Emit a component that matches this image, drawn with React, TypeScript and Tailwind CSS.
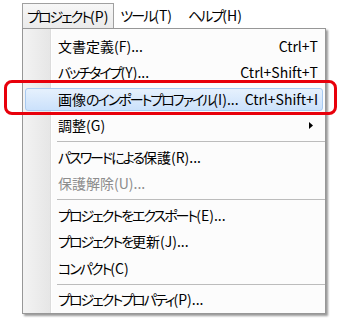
const FONT = "[font-family:'Noto_Sans_CJK_JP',sans-serif] [font-feature-settings:'palt']"

type Entry =
  | { kind: 'item'; label: string; shortcut?: string; disabled?: boolean; sub?: boolean; hot?: boolean }
  | { kind: 'sep' }

const entries: Entry[] = [
  { kind: 'item', label: '文書定義(F)...', shortcut: 'Ctrl+T' },
  { kind: 'item', label: 'バッチタイプ(Y)...', shortcut: 'Ctrl+Shift+T' },
  { kind: 'item', label: '画像のインポートプロファイル(I)...', shortcut: 'Ctrl+Shift+I', hot: true },
  { kind: 'item', label: '調整(G)', sub: true },
  { kind: 'sep' },
  { kind: 'item', label: 'パスワードによる保護(R)...' },
  { kind: 'item', label: '保護解除(U)...', disabled: true },
  { kind: 'sep' },
  { kind: 'item', label: 'プロジェクトをエクスポート(E)...' },
  { kind: 'item', label: 'プロジェクトを更新(J)...' },
  { kind: 'item', label: 'コンパクト(C)' },
  { kind: 'sep' },
  { kind: 'item', label: 'プロジェクトプロパティ(P)...' },
]

// kana in the UI font are narrower than full width, so tighten them
function Jp({ text }: { text: string }) {
  return (
    <>
      {text.split(/([\u3040-\u30ff]+)/).map((part, i) =>
        /^[\u3040-\u30ff]+$/.test(part) ? (
          <span key={i} className="tracking-[-2px]">
            {part}
          </span>
        ) : (
          <span key={i}>{part}</span>
        ),
      )}
    </>
  )
}

export default function App() {
  return (
    <div className={`relative h-[319px] w-[341px] overflow-hidden bg-white text-[14px] text-black ${FONT}`}>
      {/* menu bar */}
      <div className="flex h-[28px] items-end pl-[22px]">
        <div className="flex h-[25px] items-center border-x border-t border-[#a0a0a0] bg-gradient-to-b from-[#f7f7f7] to-[#ebebeb] pl-[4px] pr-[5px] whitespace-nowrap">
          <Jp text="プロジェクト(P)" />
        </div>
        <div className="flex h-[25px] items-center pl-[6px] whitespace-nowrap">
          <Jp text="ツール(T)" />
        </div>
        <div className="flex h-[25px] items-center pl-[16px] whitespace-nowrap">
          <Jp text="ヘルプ(H)" />
        </div>
      </div>

      {/* dropdown */}
      <div className="ml-[22px] w-[304px] border border-[#979797] bg-[linear-gradient(to_right,#f3f3f3_0,#e6e6e6_27px,#dcdcdc_27px,#dcdcdc_28px,#ffffff_28px,#ffffff_29px,#fcfcfc_29px)] pt-[4px] shadow-[2px_2px_2px_rgba(0,0,0,0.4)]">
        {entries.map((e, i) =>
          e.kind === 'sep' ? (
            <div key={i} className="flex h-[5px] items-center pl-[34px]">
              <div className="h-px w-full bg-[#bcbcbc]" />
            </div>
          ) : (
            <div key={i} className="h-[26.5px] px-[2px] py-[2px]">
              <div
                className={`flex h-full items-center justify-between rounded-[3px] border pl-[32px] pr-[4px] ${
                  e.hot
                    ? 'border-[#a8caf1] bg-gradient-to-b from-[#e6f1fd] to-[#cbe1fb]'
                    : 'border-transparent'
                } ${e.disabled ? 'text-[#8d8d8d]' : ''}`}
              >
                <span className="whitespace-nowrap">
                  <Jp text={e.label} />
                </span>
                {e.shortcut && <span className="whitespace-nowrap">{e.shortcut}</span>}
                {e.sub && (
                  <svg width="4" height="7" viewBox="0 0 4 7" className="mr-[5px]">
                    <path d="M0 0L4 3.5L0 7Z" fill="#000" />
                  </svg>
                )}
              </div>
            </div>
          ),
        )}
      </div>

      {/* annotation */}
      <div className="absolute left-[4px] top-[80px] h-[35px] w-[333px] rounded-[8px] border-[3px] border-[#e8000b]" />
    </div>
  )
}
